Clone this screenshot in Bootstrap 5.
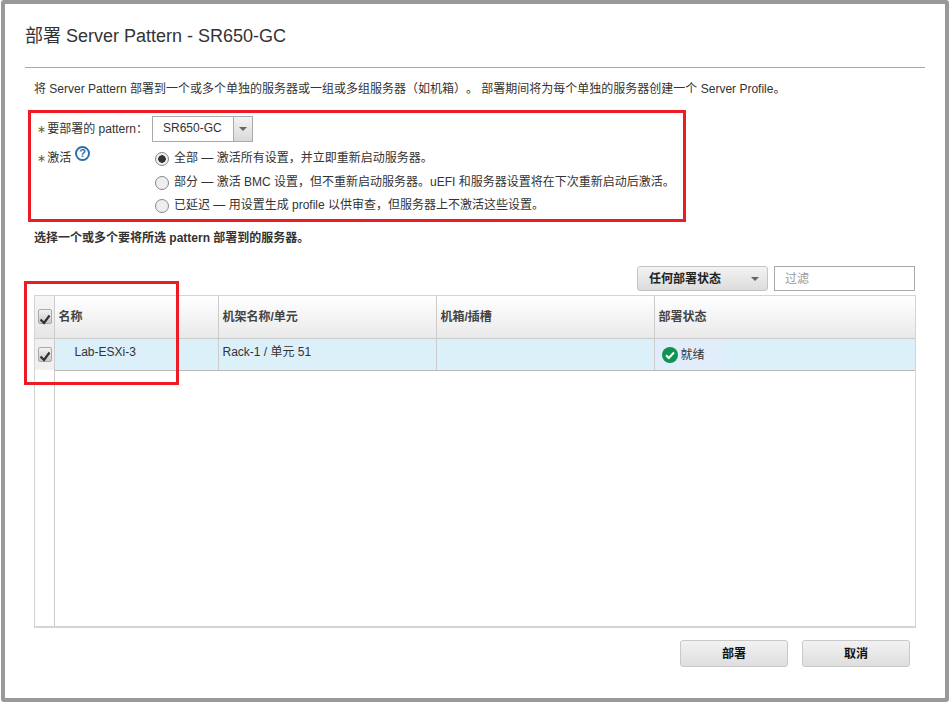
<!DOCTYPE html>
<html lang="zh-CN">
<head>
  <meta charset="UTF-8">
  <title>部署 Server Pattern</title>
  <link href="https://cdn.jsdelivr.net/npm/bootstrap@5.3.0/dist/css/bootstrap.min.css" rel="stylesheet">
  <style>
    body {
      margin: 0;
      background: #fff;
      color: #333;
      font-family: "Liberation Sans", "Noto Sans CJK SC", sans-serif;
      font-size: 12px;
      line-height: 16px;
      text-spacing-trim: space-all;
    }
    .dlg {
      position: relative;
      width: 948px;
      height: 702px;
      margin-left: 1px;
      padding: 0 20px;
      border: 4px solid #999;
      border-radius: 3px;
      background: #fff;
    }
    .dlg-title {
      margin: 0;
      padding-top: 20px;
      height: 63px;
      font-size: 18px;
      line-height: 24px;
      font-weight: 400;
      color: #333;
    }
    .dlg-rule { height: 1px; background: #a8a8a8; }
    .intro { padding: 13px 0 0 9px; height: 42px; white-space: nowrap; }
    .hl-box { border: 3px solid #ed1c24; }
    .form-box {
      width: 658px;
      height: 112px;
      margin-left: 3px;
      padding: 3px 0 0 6px;
    }
    .req { color: #6d5d35; font-family: "DejaVu Sans", sans-serif; font-size: 11px; margin-right: 1px; }
    .lbl-pat { width: 115px; padding-top: 1px; }
    .lbl-act { width: 118px; padding-top: 8px; }
    .pat-select { width: 101px; height: 26px; border: 1px solid #aaa; background: #fff; }
    .pat-value { width: 80px; padding-left: 10px; line-height: 23px; }
    .pat-arrow {
      flex: 1;
      border-left: 1px solid #aaa;
      background: linear-gradient(#f3f3f3, #d9d9d9);
    }
    .caret-down {
      width: 0;
      height: 0;
      border-left: 4px solid transparent;
      border-right: 4px solid transparent;
      border-top: 4px solid #666;
    }
    .help-mark {
      width: 15px;
      height: 15px;
      margin: -4px 0 0 4px;
      border: 2px solid #2a6fa8;
      border-radius: 50%;
      color: #2a6fa8;
      font-size: 11px;
      font-weight: 700;
      line-height: 11px;
      text-align: center;
      vertical-align: top;
      display: inline-block;
    }
    .act-list { padding-top: 8px; }
    .act-opt { height: 23.5px; gap: 5px; white-space: nowrap; }
    .act-opt .form-check-input {
      width: 14px;
      height: 14px;
      margin: 2px 0 0;
      border: 1px solid #888;
      background-color: #eee;
      flex: none;
    }
    .act-opt .form-check-input:checked {
      background-color: #eee;
      border-color: #888;
      background-image: radial-gradient(circle, #333 0 3.5px, transparent 4px);
    }
    .pick-note { padding: 8px 0 0 9px; height: 44px; font-weight: 700; }
    .tools { height: 29px; gap: 6px; padding-right: 10px; }
    .status-btn {
      width: 131px;
      height: 25px;
      padding: 0 8px 0 11px;
      border: 1px solid #c4c4c4;
      border-radius: 3px;
      background: linear-gradient(#f3f3f3, #dcdcdc);
      font-weight: 700;
      color: #222;
      font-size: 12px;
    }
    .filter-box {
      width: 141px;
      height: 25px;
      padding: 0 10px;
      border: 1px solid #aaa;
      border-radius: 0;
      font-size: 12px;
      font-family: inherit;
    }
    .filter-box::placeholder { color: #999; }
    .grid-wrap { margin-left: 9px; width: 882px; height: 333px; border: 1px solid #d4d4d4; border-bottom-width: 2px; }
    .srv-table { width: 100%; height: 100%; table-layout: fixed; border-collapse: collapse; }
    .srv-table th, .srv-table td { padding: 0 4px; border-right: 1px solid #ccc; vertical-align: middle; }
    .srv-table th:last-child, .srv-table td:last-child { border-right: 0; }
    .srv-table thead tr { height: 42px; }
    .srv-table th {
      background: linear-gradient(#fff, #e9e9e9);
      border-bottom: 1px solid #ccc;
      font-weight: 700;
      color: #444;
    }
    .srv-table .sel-row { height: 32px; }
    .srv-table .sel-row td { background: #dcf0f9; border-bottom: 1px solid #bbb; padding-bottom: 5px; }
    .srv-table .sel-row td.chk-cell { background: #f0f0f0; border-bottom: 0; padding-bottom: 0; }
    .srv-table .sel-row td.state-cell { background: linear-gradient(90deg, #e2edfb 0 70px, #dcf0f9 70px); padding: 2px 0 0 7px; }
    .srv-table .chk-cell { padding: 0 3px; }
    .srv-table th.chk-cell { background: linear-gradient(#f6f6f6, #e6e6e6); }
    .srv-name { padding-left: 20px !important; }
    .chk-mark {
      display: block;
      width: 14px;
      height: 15px;
      border: 1px solid #aaa;
      border-radius: 2px;
      background: linear-gradient(#f2f2f2, #c9c9c9);
    }
    .state-icon { margin-right: 3px; vertical-align: -4px; }
    .dlg-foot { padding: 12px 15px 0 0; gap: 14px; }
    .foot-btn {
      width: 108px;
      height: 27px;
      padding: 0;
      border: 1px solid #c8c8c8;
      border-radius: 3px;
      background: linear-gradient(#f2f2f2, #dedede);
      color: #111;
      font-size: 12px;
      font-weight: 700;
    }
    /* annotation drawn over the table */
    .hl-grid { position: absolute; left: 19px; top: 277px; width: 155px; height: 104px; pointer-events: none; }
  </style>
</head>
<body>
  <div class="dlg">
    <h1 class="dlg-title">部署 Server Pattern - SR650-GC</h1>
    <div class="dlg-rule"></div>
    <div class="intro">将 Server Pattern 部署到一个或多个单独的服务器或一组或多组服务器（如机箱）。 部署期间将为每个单独的服务器创建一个 Server Profile。</div>

    <div class="hl-box form-box">
      <div class="d-flex align-items-center">
        <div class="lbl-pat"><span class="req">∗</span>要部署的 pattern：</div>
        <div class="pat-select d-flex">
          <div class="pat-value">SR650-GC</div>
          <div class="pat-arrow d-flex align-items-center justify-content-center"><span class="caret-down"></span></div>
        </div>
      </div>
      <div class="d-flex">
        <div class="lbl-act"><span class="req">∗</span>激活<span class="help-mark">?</span></div>
        <div class="act-list">
          <div class="act-opt d-flex align-items-start"><input class="form-check-input" type="radio" name="act" checked><span>全部 — 激活所有设置，并立即重新启动服务器。</span></div>
          <div class="act-opt d-flex align-items-start"><input class="form-check-input" type="radio" name="act"><span>部分 — 激活 BMC 设置，但不重新启动服务器。uEFI 和服务器设置将在下次重新启动后激活。</span></div>
          <div class="act-opt d-flex align-items-start"><input class="form-check-input" type="radio" name="act"><span>已延迟 — 用设置生成 profile 以供审查，但服务器上不激活这些设置。</span></div>
        </div>
      </div>
    </div>

    <div class="pick-note">选择一个或多个要将所选 pattern 部署到的服务器。</div>

    <div class="tools d-flex justify-content-end align-items-start">
      <button class="status-btn d-flex align-items-center justify-content-between" type="button">任何部署状态<span class="caret-down"></span></button>
      <input class="filter-box" type="text" placeholder="过滤">
    </div>

    <div class="grid-wrap">
      <table class="srv-table">
        <colgroup>
          <col style="width: 19px">
          <col style="width: 164px">
          <col style="width: 218px">
          <col style="width: 218px">
          <col>
        </colgroup>
        <thead>
          <tr>
            <th class="chk-cell"><span class="chk-mark"><svg width="12" height="13" viewBox="0 0 12 13"><path d="M1.5 6.5l3.5 3.5 5.5-7.5" fill="none" stroke="#333" stroke-width="2.2"/></svg></span></th>
            <th>名称</th>
            <th>机架名称/单元</th>
            <th>机箱/插槽</th>
            <th>部署状态</th>
          </tr>
        </thead>
        <tbody>
          <tr class="sel-row">
            <td class="chk-cell"><span class="chk-mark"><svg width="12" height="13" viewBox="0 0 12 13"><path d="M1.5 6.5l3.5 3.5 5.5-7.5" fill="none" stroke="#333" stroke-width="2.2"/></svg></span></td>
            <td class="srv-name">Lab-ESXi-3</td>
            <td>Rack-1 / 单元 51</td>
            <td></td>
            <td class="state-cell">
              <svg class="state-icon" width="16" height="16" viewBox="0 0 16 16"><circle cx="8" cy="8" r="8" fill="#0f9350"/><path d="M4 8.2l2.8 2.8L12 5.5" fill="none" stroke="#fff" stroke-width="2"/></svg>就绪
            </td>
          </tr>
          <tr>
            <td></td>
            <td class="border-0" colspan="4"></td>
          </tr>
        </tbody>
      </table>
    </div>

    <div class="dlg-foot d-flex justify-content-end">
      <button class="foot-btn" type="button">部署</button>
      <button class="foot-btn" type="button">取消</button>
    </div>

    <div class="hl-box hl-grid"></div>
  </div>
  <script src="https://cdn.jsdelivr.net/npm/bootstrap@5.3.0/dist/js/bootstrap.bundle.min.js"></script>
</body>
</html>
